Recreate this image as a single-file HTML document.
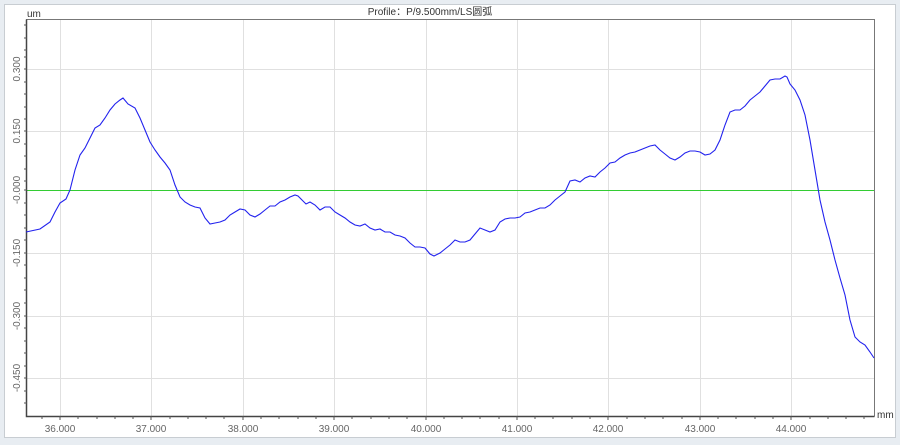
<!DOCTYPE html>
<html><head><meta charset="utf-8"><style>
body{margin:0;width:900px;height:445px;background:#e8edf2;overflow:hidden}
</style></head><body>
<svg width="900" height="445" style="position:absolute;left:0;top:0;font-family:'Liberation Sans','Noto Sans CJK SC',sans-serif">
<rect x="4.5" y="4.5" width="891" height="433" fill="#fff" stroke="#c8cdd2"/>
<text x="430" y="15" font-size="10" text-anchor="middle" fill="#333">Profile：P/9.500mm/LS圆弧</text>
<text x="27" y="17" font-size="10" fill="#333">um</text>
<g stroke="#e0e0e0" stroke-width="1">
<line x1="60.5" y1="20" x2="60.5" y2="416"/><line x1="151.5" y1="20" x2="151.5" y2="416"/><line x1="243.5" y1="20" x2="243.5" y2="416"/><line x1="334.5" y1="20" x2="334.5" y2="416"/><line x1="426.5" y1="20" x2="426.5" y2="416"/><line x1="517.5" y1="20" x2="517.5" y2="416"/><line x1="608.5" y1="20" x2="608.5" y2="416"/><line x1="700.5" y1="20" x2="700.5" y2="416"/><line x1="791.5" y1="20" x2="791.5" y2="416"/>
<line x1="27" y1="69.5" x2="874" y2="69.5"/><line x1="27" y1="131.5" x2="874" y2="131.5"/><line x1="27" y1="253.5" x2="874" y2="253.5"/><line x1="27" y1="316.5" x2="874" y2="316.5"/><line x1="27" y1="378.5" x2="874" y2="378.5"/>
</g>
<line x1="27" y1="190.5" x2="874" y2="190.5" stroke="#33cc33"/>
<path d="M26.5,416.5V19.5H874.5V416.5" fill="none" stroke="#777"/>
<path d="M26.5,19.5V416.5H874.5" fill="none" stroke="#444" stroke-width="1.5"/>
<g stroke="#555">
<path d="M24,25h3M24,38h3M24,50h3M24,57h3M24,69h3M24,82h3M24,94h3M24,107h3M24,119h3M24,131h3M24,144h3M24,156h3M24,169h3M24,181h3M24,190h3M24,203h3M24,215h3M24,228h3M24,240h3M24,253h3M24,265h3M24,278h3M24,290h3M24,303h3M24,316h3M24,328h3M24,341h3M24,353h3M24,366h3M24,378h3M24,391h3M24,403h3"/>
<path d="M42,416v3M60,416v4M78,416v3M97,416v3M115,416v3M133,416v3M151,416v4M170,416v3M188,416v3M206,416v3M224,416v3M243,416v4M261,416v3M279,416v3M298,416v3M316,416v3M334,416v4M352,416v3M371,416v3M389,416v3M407,416v3M426,416v4M444,416v3M462,416v3M480,416v3M499,416v3M517,416v4M535,416v3M553,416v3M572,416v3M590,416v3M608,416v4M627,416v3M645,416v3M663,416v3M682,416v3M700,416v4M718,416v3M736,416v3M755,416v3M773,416v3M791,416v4M810,416v3M828,416v3M846,416v3M864,416v3"/>
</g>
<g font-size="10" fill="#666" text-anchor="middle">
<text x="60" y="432">36.000</text><text x="151" y="432">37.000</text><text x="243" y="432">38.000</text><text x="334" y="432">39.000</text><text x="426" y="432">40.000</text><text x="517" y="432">41.000</text><text x="608" y="432">42.000</text><text x="700" y="432">43.000</text><text x="791" y="432">44.000</text>
<text transform="translate(20,69) rotate(-90)">0.300</text>
<text transform="translate(20,131) rotate(-90)">0.150</text>
<text transform="translate(20,190) rotate(-90)">-0.000</text>
<text transform="translate(20,253) rotate(-90)">-0.150</text>
<text transform="translate(20,316) rotate(-90)">-0.300</text>
<text transform="translate(20,378) rotate(-90)">-0.450</text>
</g>
<text x="877" y="418" font-size="10" fill="#333">mm</text>
<polyline fill="none" stroke="#2222ee" stroke-width="1.1" points="26,232 40,229 50,222 55,212 60,203 66,199 70,190 75,170 80,155 85,148 90,138 95,128 100,125 105,118 110,110 115,104 120,100 123,98 128,104 135,108 140,118 145,130 150,142 155,150 160,157 165,163 170,170 175,185 180,197 185,202 190,205 195,207 200,208 205,218 210,224 215,223 220,222 225,220 230,215 235,212 240,209 245,210 250,215 255,217 260,214 265,210 270,206 275,206 280,202 285,200 290,197 295,195 298,196 302,200 306,204 310,202 315,205 320,210 325,207 330,207 335,212 340,215 345,218 350,222 355,225 360,226 365,224 370,228 375,230 380,229 385,232 390,232 395,235 400,236 405,238 410,243 415,247 420,247 425,248 430,254 434,256 440,253 445,249 450,245 455,240 460,242 465,242 470,240 475,234 480,228 485,230 490,232 495,230 500,222 505,219 510,218 515,218 520,217 525,213 530,212 535,210 540,208 545,208 550,205 555,200 560,196 565,192 570,181 575,180 580,182 585,178 590,176 595,177 600,172 605,168 610,163 615,162 620,158 625,155 630,153 635,152 640,150 645,148 650,146 655,145 660,150 665,154 670,158 675,160 680,157 685,153 690,151 695,151 700,152 705,155 710,154 715,150 720,140 725,125 730,112 735,110 740,110 745,106 750,100 755,96 760,92 765,86 770,80 775,79 780,79 785,76 787,77 790,84 795,90 800,100 805,115 810,140 815,170 820,200 825,222 830,240 835,260 840,278 845,295 850,320 855,337 860,342 865,345 870,352 874,358"/>
</svg>
</body></html>
